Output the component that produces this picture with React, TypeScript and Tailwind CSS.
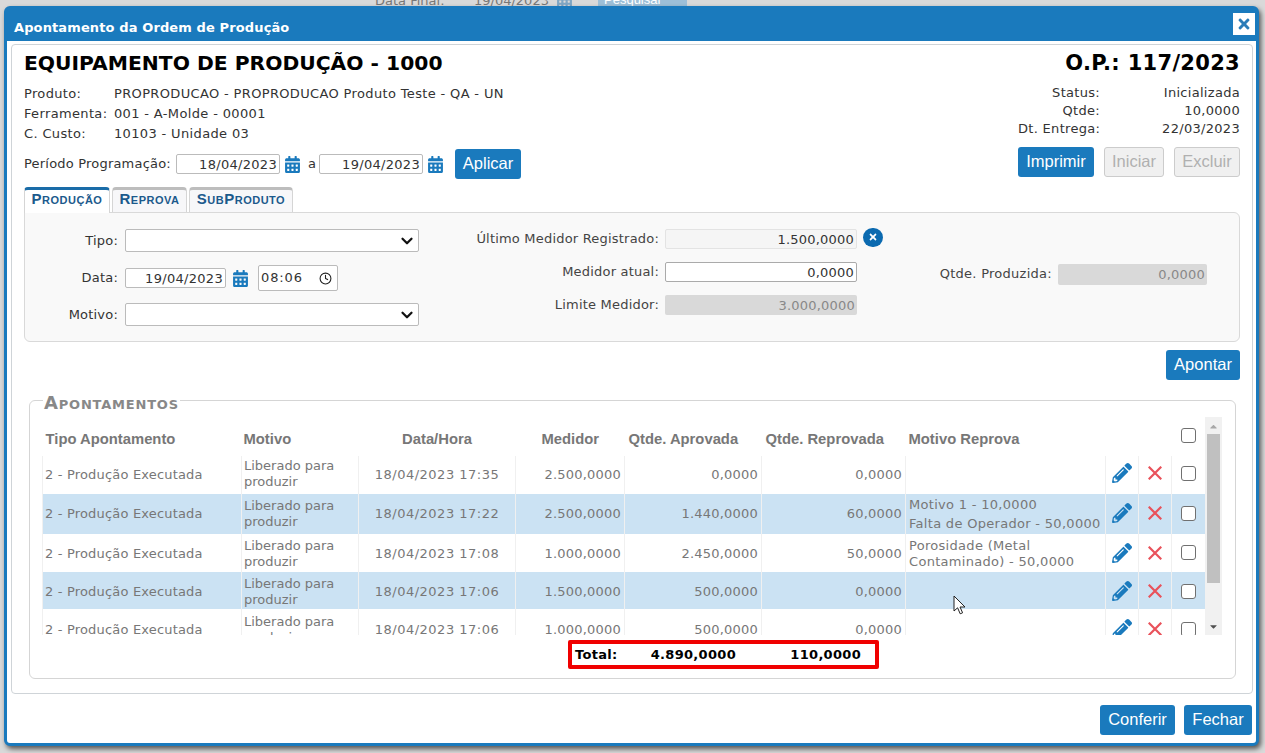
import React from "react";
import { FaCalendarAlt, FaPencilAlt, FaTimes, FaCaretUp, FaCaretDown } from "react-icons/fa";
import { Clock, ChevronDown } from "lucide-react";

const rows = [
  { h: "h-[37px]", blue: false, med: "2.500,0000", dt: "18/04/2023 17:35", ap: "0,0000", rep: "0,0000", mot: [] as string[], tight: true },
  { h: "h-[41px] [&>td]:pt-[1px]", blue: true, med: "2.500,0000", dt: "18/04/2023 17:22", ap: "1.440,0000", rep: "60,0000", mot: ["Motivo 1 - 10,0000", "Falta de Operador - 50,0000"], tight: false },
  { h: "h-[37px] [&>td]:pt-[2px]", blue: false, med: "1.000,0000", dt: "18/04/2023 17:08", ap: "2.450,0000", rep: "50,0000", mot: ["Porosidade (Metal", "Contaminado) - 50,0000"], tight: true },
  { h: "h-[38px] [&>td]:pt-[4px]", blue: true, med: "1.500,0000", dt: "18/04/2023 17:06", ap: "500,0000", rep: "0,0000", mot: [], tight: true },
  { h: "h-[38px] [&>td]:pt-[4px]", blue: false, med: "1.000,0000", dt: "18/04/2023 17:06", ap: "500,0000", rep: "0,0000", mot: [], tight: true },
];

function Btn({ children, className = "" }: { children: React.ReactNode; className?: string }) {
  return (
    <button className={"h-[30px] rounded-[3px] bg-[#1a7abd] pb-[2px] text-white text-[16.5px] font-[Liberation_Sans,Arial,sans-serif] " + className}>
      {children}
    </button>
  );
}

function Off({ children, className = "" }: { children: React.ReactNode; className?: string }) {
  return (
    <button className={"h-[30px] rounded-[3px] bg-[#f0f0f0] border border-[#cccccc] pb-[2px] text-[#b0b0b0] text-[16.5px] font-[Liberation_Sans,Arial,sans-serif] " + className}>
      {children}
    </button>
  );
}

function Check() {
  return <input type="checkbox" className="appearance-none block w-[15px] h-[15px] rounded-[3px] border border-[#707070] bg-white" />;
}

function RedX() {
  return (
    <svg width="14" height="14" viewBox="0 0 14 14" className="block">
      <path d="M1.5 1.5 12.5 12.5M12.5 1.5 1.5 12.5" stroke="#e9525b" strokeWidth="2.2" strokeLinecap="square" fill="none" />
    </svg>
  );
}

function DateField({ value, w }: { value: string; w: string }) {
  return (
    <input
      readOnly
      value={value}
      className={"h-[20px] rounded-[2px] border border-[#bbbbbb] bg-white text-right pr-[2px] text-[13px] tracking-[0.3px] text-[#333] outline-none " + w}
    />
  );
}

function Sel() {
  return (
    <div className="relative ml-[7px] h-[23px] w-[294px]">
      <select className="block h-[23px] w-[294px] appearance-none rounded-[2px] border border-[#bbbbbb] bg-white text-[13px]"><option></option></select>
      <ChevronDown size={18} strokeWidth={3} className="pointer-events-none absolute right-[3px] top-[3px] text-[#111]" />
    </div>
  );
}

export default function App() {
  return (
    <div className="relative h-[753px] w-[1265px] overflow-hidden bg-[#d9d9d9] pl-[4px] pt-[6px] font-[DejaVu_Sans,Verdana,sans-serif] text-[#333]">
      <div className="absolute left-[375px] top-[-9px] text-[13px] text-[#777]">Data Final:</div>
      <div className="absolute left-[474px] top-[-9px] text-[13px] text-[#777]">19/04/2023</div>
      <FaCalendarAlt size={17} className="absolute left-[556px] top-[-8px] text-[#7fa6c4]" />
      <div className="absolute left-[598px] top-[-16px] h-[22px] w-[89px] bg-[#9dbfd8] pl-[6px] pt-[6px] text-[13px] text-white font-[Liberation_Sans,sans-serif]">Pesquisar</div>

      <div className="relative flex h-[740px] w-[1255px] flex-col rounded-[6px] border-[3px] border-[#1a7abd] bg-white shadow-[2px_3px_5px_rgba(0,0,0,0.6)]">
        <div className="flex h-[32px] flex-none items-center justify-between bg-[#1a7abd] pl-[7px] pr-[1px]">
          <span className="mt-[5px] text-[13px] font-bold tracking-[0.12px] text-white">Apontamento da Ordem de Produção</span>
          <button className="-mt-[2px] flex h-[22px] w-[22px] items-center justify-center bg-white text-[#2b7cb8]">
            <FaTimes size={16} />
          </button>
        </div>

        <div className="ml-[4px] mt-[3px] flex h-[650px] w-[1242px] flex-none flex-col rounded-[4px] border border-[#cfd4d8] pl-[12px] pr-[12px]">
          <div className="flex h-[103px] flex-none justify-between">
            <div>
              <div className="mt-[5px] text-[20.3px] font-bold leading-[27px] text-black">EQUIPAMENTO DE PRODUÇÃO - 1000</div>
              <div className="mt-[7px] flex flex-col text-[13px] leading-[20px] tracking-[0.35px] text-[#333]">
                <div className="flex"><span className="w-[90px]">Produto:</span><span>PROPRODUCAO - PROPRODUCAO Produto Teste - QA - UN</span></div>
                <div className="flex"><span className="w-[90px]">Ferramenta:</span><span>001 - A-Molde - 00001</span></div>
                <div className="flex"><span className="w-[90px]">C. Custo:</span><span>10103 - Unidade 03</span></div>
              </div>
              <div className="mt-[5px] flex items-center text-[13px]">
                <span className="w-[152px] whitespace-nowrap tracking-[0.2px]">Período Programação:</span>
                <DateField value="18/04/2023" w="w-[104px]" />
                <FaCalendarAlt size={17} className="ml-[4px] text-[#1a7abd]" />
                <span className="ml-[7px] mr-[3px] w-[8px]">a</span>
                <DateField value="19/04/2023" w="w-[104px]" />
                <FaCalendarAlt size={17} className="ml-[4px] text-[#1a7abd]" />
                <Btn className="ml-[11px] w-[66px]">Aplicar</Btn>
              </div>
            </div>
            <div className="flex flex-col items-end">
              <div className="mt-[5px] text-[21px] font-bold leading-[27px] tracking-[0.3px] text-black">O.P.: 117/2023</div>
              <div className="mt-[7px] flex w-[222px] flex-col text-[13px] leading-[18px] tracking-[0.3px]">
                <div className="flex justify-between"><span className="w-[82px] text-right">Status:</span><span>Inicializada</span></div>
                <div className="flex justify-between"><span className="w-[82px] text-right">Qtde:</span><span>10,0000</span></div>
                <div className="flex justify-between"><span className="w-[82px] whitespace-nowrap text-right">Dt. Entrega:</span><span>22/03/2023</span></div>
              </div>
              <div className="mt-[9px] flex gap-[10px]">
                <Btn className="w-[76px]">Imprimir</Btn>
                <Off className="w-[60px]">Iniciar</Off>
                <Off className="w-[66px]">Excluir</Off>
              </div>
            </div>
          </div>

          <div className="mt-[39px] flex h-[25px] flex-none items-end gap-[2px] font-[Liberation_Sans,sans-serif] text-[15px] font-bold tracking-[0.5px] [font-variant-caps:small-caps] text-[#1c5a8c]">
            <div className="relative z-10 -mb-[1px] flex h-[26px] w-[86px] items-center justify-center rounded-t-[4px] border-x border-[#d5d5d5] border-t-[3px] border-t-[#1a6ca8] bg-white pb-[5px]">Produção</div>
            <div className="flex h-[25px] w-[75px] items-center justify-center rounded-t-[4px] border-x border-[#d5d5d5] border-t-[3px] border-t-[#bdbdbd] bg-[#f7f7f9] pb-[4px]">Reprova</div>
            <div className="flex h-[25px] w-[104px] items-center justify-center rounded-t-[4px] border-x border-[#d5d5d5] border-t-[3px] border-t-[#bdbdbd] bg-[#f7f7f9] pb-[4px]">SubProduto</div>
          </div>

          <div className="flex h-[130px] flex-none rounded-b-[6px] rounded-tr-[6px] border border-[#d9d9d9] bg-[#f9f9f9] text-[13px] tracking-[0.2px]">
            <div className="flex w-[395px] flex-none flex-col pt-[16px]">
              <div className="flex h-[23px] items-center">
                <span className="w-[93px] text-right">Tipo:</span>
                <Sel />
              </div>
              <div className="mt-[13px] flex h-[26px] items-center">
                <span className="w-[93px] text-right">Data:</span>
                <DateField value="19/04/2023" w="ml-[7px] w-[101px]" />
                <FaCalendarAlt size={17} className="ml-[6px] text-[#1a7abd]" />
                <div className="ml-[9px] flex h-[26px] w-[80px] items-center justify-between rounded-[2px] border border-[#bbbbbb] bg-white pl-[2px] pr-[5px] text-[13px]">
                  <span className="tracking-[0.9px]">08:06</span>
                  <Clock size={13} strokeWidth={2} className="text-[#222]" />
                </div>
              </div>
              <div className="mt-[12px] flex h-[23px] items-center">
                <span className="w-[93px] text-right">Motivo:</span>
                <Sel />
              </div>
            </div>

            <div className="flex w-[489px] flex-none flex-col pt-[16px] text-[#444]">
              <div className="flex h-[20px] items-center">
                <span className="w-[239px] whitespace-nowrap text-right">Último Medidor Registrado:</span>
                <input readOnly value="1.500,0000" className="ml-[6px] h-[20px] w-[192px] rounded-[2px] border border-[#e3e3e3] bg-[#f5f5f5] pr-[2px] text-right text-[#333] outline-none" />
                <div className="ml-[6px] mb-[4px] flex h-[19px] w-[20px] items-center justify-center rounded-full bg-[#0b6ab0] text-white"><FaTimes size={10} /></div>
              </div>
              <div className="mt-[13px] flex h-[20px] items-center">
                <span className="w-[239px] text-right">Medidor atual:</span>
                <input readOnly value="0,0000" className="ml-[6px] h-[20px] w-[192px] rounded-[2px] border border-[#aaaaaa] bg-white pr-[2px] text-right text-[#333] outline-none" />
              </div>
              <div className="mt-[13px] flex h-[20px] items-center">
                <span className="w-[239px] text-right">Limite Medidor:</span>
                <input readOnly value="3.000,0000" className="ml-[6px] h-[20px] w-[192px] rounded-[2px] bg-[#d9d9d9] pr-[2px] text-right text-[#888] outline-none" />
              </div>
            </div>

            <div className="flex flex-1 items-start pt-[51px] text-[#444]">
              <span className="w-[143px] whitespace-nowrap text-right tracking-[0.27px]">Qtde. Produzida:</span>
              <input readOnly value="0,0000" className="ml-[6px] h-[21px] w-[149px] rounded-[2px] bg-[#d9d9d9] pr-[2px] text-right text-[#888] outline-none" />
            </div>
          </div>

          <div className="mt-[8px] flex flex-none justify-end">
            <Btn className="w-[74px]">Apontar</Btn>
          </div>

          <fieldset className="ml-[5px] mt-[9px] h-[290px] w-[1207px] flex-none rounded-[6px] border border-[#d5d5d5] pl-[12px] pr-[13px]">
            <legend className="ml-[1px] h-[23px] pl-[1px] pr-[1px] pt-[4px] text-[18px] font-bold leading-[19px] tracking-[0.8px] text-[#888] [font-variant-caps:small-caps]">Apontamentos</legend>
            <div className="relative mt-[5px] flex h-[218px]">
              <div className="h-[218px] w-[1163px] flex-none overflow-hidden">
                <table className="w-[1163px] table-fixed border-collapse text-[13px] text-[#777]">
                  <colgroup>
                    <col className="w-[199px]" />
                    <col className="w-[117px]" />
                    <col className="w-[157px]" />
                    <col className="w-[109px]" />
                    <col className="w-[137px]" />
                    <col className="w-[144px]" />
                    <col className="w-[200px]" />
                    <col className="w-[33px]" />
                    <col className="w-[33px]" />
                    <col className="w-[34px]" />
                  </colgroup>
                  <thead className="font-[Liberation_Sans,sans-serif] text-[14.8px] font-bold">
                    <tr className="h-[39px]">
                      <th className="pl-[3px] pt-[5px] text-left">Tipo Apontamento</th>
                      <th className="pl-[2px] pt-[5px] text-left">Motivo</th>
                      <th className="pt-[5px] text-center">Data/Hora</th>
                      <th className="pl-[26px] pt-[5px] text-left">Medidor</th>
                      <th className="pl-[4px] pt-[5px] text-left">Qtde. Aprovada</th>
                      <th className="pl-[4px] pt-[5px] text-left">Qtde. Reprovada</th>
                      <th className="pl-[3px] pt-[5px] text-left">Motivo Reprova</th>
                      <th></th>
                      <th></th>
                      <th className="pb-[3px] pr-[1px]"><div className="flex justify-center"><Check /></div></th>
                    </tr>
                  </thead>
                  <tbody>
                    {rows.map((r, i) => (
                      <tr key={i} className={r.h + " border-b border-white " + (r.blue ? "bg-[#cbe2f3]" : "bg-white")}>
                        <td className="border-x border-[#f0f0f0] pl-[2px] tracking-[0.18px]">2 - Produção Executada</td>
                        <td className="border-r border-[#f0f0f0] pl-[2px] leading-[16px]">Liberado para produzir</td>
                        <td className="border-r border-[#f0f0f0] text-center tracking-[0.5px]">{r.dt}</td>
                        <td className="border-r border-[#f0f0f0] pr-[3px] text-right tracking-[0.2px]">{r.med}</td>
                        <td className="border-r border-[#f0f0f0] pr-[3px] text-right tracking-[0.2px]">{r.ap}</td>
                        <td className="border-r border-[#f0f0f0] pr-[3px] text-right tracking-[0.2px]">{r.rep}</td>
                        <td className={"border-r border-[#f0f0f0] pl-[3px] whitespace-nowrap tracking-[0.3px] " + (r.tight ? "leading-[16px]" : "leading-[19px]")}>
                          {r.mot.map((m) => <div key={m}>{m}</div>)}
                        </td>
                        <td className="border-r border-[#f0f0f0]"><div className="flex justify-center pb-[2px] text-[#1a7abd]"><FaPencilAlt size={20} /></div></td>
                        <td className="border-r border-[#f0f0f0]"><div className="flex justify-center pb-[2px]"><RedX /></div></td>
                        <td className="pr-[1px]"><div className="flex justify-center pb-[2px]"><Check /></div></td>
                      </tr>
                    ))}
                  </tbody>
                </table>
              </div>
              <div className="relative h-[218px] w-[17px] flex-none bg-[#f1f1f1]">
                <FaCaretUp size={11} className="absolute left-[3px] top-[4px] text-[#a8a8a8]" />
                <div className="absolute left-[2px] top-[17px] h-[149px] w-[13px] bg-[#c0c0c0]"></div>
                <FaCaretDown size={11} className="absolute left-[3px] bottom-[3px] text-[#505050]" />
              </div>
            </div>
            <div className="ml-[526px] mt-[5px] flex h-[29px] w-[311px] items-center rounded-[2px] border-[4px] border-[#f00000] text-[13px] font-bold tracking-[0.3px] text-black">
              <span className="ml-[3px] w-[74px]">Total:</span>
              <span className="w-[87px] text-right">4.890,0000</span>
              <span className="w-[125px] text-right">110,0000</span>
            </div>
          </fieldset>
        </div>

        <div className="mt-[11px] flex justify-end gap-[9px] pr-[4px]">
          <Btn className="w-[75px]">Conferir</Btn>
          <Btn className="w-[68px]">Fechar</Btn>
        </div>
      </div>

      <svg width="14" height="20" viewBox="0 0 14 20" className="absolute left-[953px] top-[595px]">
        <path d="M1 1v15l3.6-3.2 2.6 6 2.4-1-2.6-5.8H12z" fill="#fff" stroke="#222" strokeWidth="1" />
      </svg>
    </div>
  );
}
